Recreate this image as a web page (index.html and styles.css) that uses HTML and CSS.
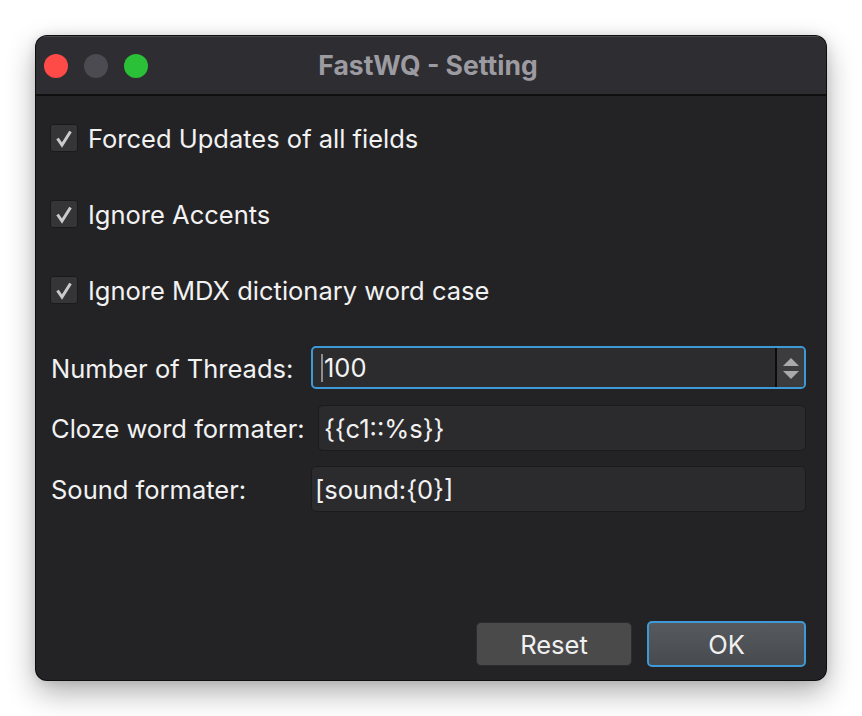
FILE: index.html
```html
<!DOCTYPE html>
<html>
<head>
<meta charset="utf-8">
<link rel="stylesheet" href="styles.css">
</head>
<body>
<div class="window">
  <div class="titlebar">
    <div class="lights">
      <span class="light red"></span>
      <span class="light gray"></span>
      <span class="light green"></span>
    </div>
    <div class="title">FastWQ - Setting</div>
  </div>
  <div class="content">
    <div class="checks">
      <label class="check"><span class="box"><svg width="26" height="26" viewBox="0 0 26 26"><path d="M6.5 13.5 L11 20 L19.5 6.5" fill="none" stroke="#cacacc" stroke-width="3" stroke-linejoin="miter" stroke-linecap="butt"/></svg></span><span class="ctext">Forced Updates of all fields</span></label>
      <label class="check"><span class="box"><svg width="26" height="26" viewBox="0 0 26 26"><path d="M6.5 13.5 L11 20 L19.5 6.5" fill="none" stroke="#cacacc" stroke-width="3" stroke-linejoin="miter" stroke-linecap="butt"/></svg></span><span class="ctext">Ignore Accents</span></label>
      <label class="check"><span class="box"><svg width="26" height="26" viewBox="0 0 26 26"><path d="M6.5 13.5 L11 20 L19.5 6.5" fill="none" stroke="#cacacc" stroke-width="3" stroke-linejoin="miter" stroke-linecap="butt"/></svg></span><span class="ctext">Ignore MDX dictionary word case</span></label>
    </div>
    <div class="form">
      <div class="flabel">Number of Threads:</div>
      <div class="spin">
        <div class="spin-inner"><span class="caret"></span>100</div>
        <div class="arrows">
          <svg width="20" height="30" viewBox="0 0 20 30"><path d="M10 5 L18 13 L2 13 Z" fill="#a9a9ab"/><path d="M10 26 L18 18 L2 18 Z" fill="#a9a9ab"/></svg>
        </div>
      </div>
      <div class="flabel">Cloze word formater:</div>
      <div class="field inset">{{c1::%s}}</div>
      <div class="flabel">Sound formater:</div>
      <div class="field">[sound:{0}]</div>
    </div>
    <div class="buttons">
      <button class="btn reset">Reset</button>
      <button class="btn ok">OK</button>
    </div>
  </div>
</div>
</body>
</html>
```
FILE: styles.css
```css
html, body {
  margin: 0;
  padding: 0;
  background: #ffffff;
}
body {
  width: 862px;
  height: 716px;
  overflow: hidden;
  font-family: Inter, "Liberation Sans", sans-serif;
}
.window {
  margin: 36px 0 0 36px;
  width: 790px;
  height: 644px;
  border-radius: 11px;
  background: #232325;
  box-shadow: 0 0 0 1px #0e0e0f, 0 12px 30px rgba(0,0,0,0.33), 0 0 12px rgba(0,0,0,0.12);
  display: flex;
  flex-direction: column;
  overflow: hidden;
}
.titlebar {
  height: 57px;
  background: #2e2d31;
  border-top: 1px solid #4a494e;
  border-bottom: 2px solid #0f0f10;
  display: flex;
  align-items: center;
  position: relative;
}
.lights {
  display: flex;
  gap: 16px;
  padding-left: 8px;
}
.light {
  width: 24px;
  height: 24px;
  border-radius: 50%;
  display: block;
}
.red { background: #fe4b48; }
.gray { background: #4c4b51; }
.green { background: #2ac138; }
.title {
  position: absolute;
  left: 0;
  right: 0;
  top: 12px;
  text-align: center;
  font-weight: 700;
  font-size: 26.5px;
  color: #9c9ba2;
  padding-right: 6px;
}
.content {
  flex: 1;
  display: flex;
  flex-direction: column;
  padding: 28px 20px 13px 14px;
}
.checks {
  display: flex;
  flex-direction: column;
  gap: 48px;
}
.check {
  display: flex;
  align-items: center;
  height: 28px;
  gap: 10px;
}
.box {
  width: 26px;
  height: 26px;
  background: #353537;
  border: 1px solid #1a1a1b;
  border-radius: 3px;
  display: block;
}
.box svg { display: block; }
.ctext {
  font-size: 25.5px;
  color: #f2f2f2;
}
.form {
  margin-top: 42px;
  display: grid;
  grid-template-columns: 261px 1fr;
  row-gap: 15px;
  align-items: center;
}
.flabel {
  font-size: 25.5px;
  color: #f2f2f2;
  padding-left: 1px;
}
.spin {
  height: 39px;
  border: 2px solid #3d9ad6;
  border-radius: 5px;
  background: #2c2c2e;
  display: flex;
  margin-bottom: 1px;
}
.spin-inner {
  flex: 1;
  display: flex;
  align-items: center;
  padding-left: 8px;
  font-size: 25.5px;
  color: #f2f2f2;
  border-right: 2px solid #0c0c0c;
}
.caret {
  display: inline-block;
  width: 2px;
  height: 28px;
  background: #8e8e90;
  margin-right: 1px;
}
.arrows {
  width: 27px;
  background: #3c3c3e;
  display: flex;
  align-items: center;
  justify-content: center;
  border-radius: 0 3px 3px 0;
}
.arrows svg { display: block; }
.field {
  height: 44px;
  background: #2b2b2d;
  border: 1px solid #1b1b1c;
  border-radius: 5px;
  display: flex;
  align-items: center;
  padding-left: 3px;
  font-size: 25.5px;
  color: #f2f2f2;
}
.field.inset {
  margin-left: 7px;
  padding-left: 5px;
}
.buttons {
  margin-top: auto;
  display: flex;
  justify-content: flex-end;
  align-items: center;
  gap: 15px;
}
.btn {
  font-family: Inter, "Liberation Sans", sans-serif;
  font-size: 25.5px;
  color: #f0f0f0;
  border-radius: 5px;
  padding: 0;
}
.reset {
  width: 156px;
  height: 44px;
  background: #4a4a4b;
  border: 1px solid #2c2c2d;
}
.ok {
  width: 159px;
  height: 46px;
  background: linear-gradient(#565a5e, #474b4f);
  border: 2px solid #3d9ad6;
}
```
